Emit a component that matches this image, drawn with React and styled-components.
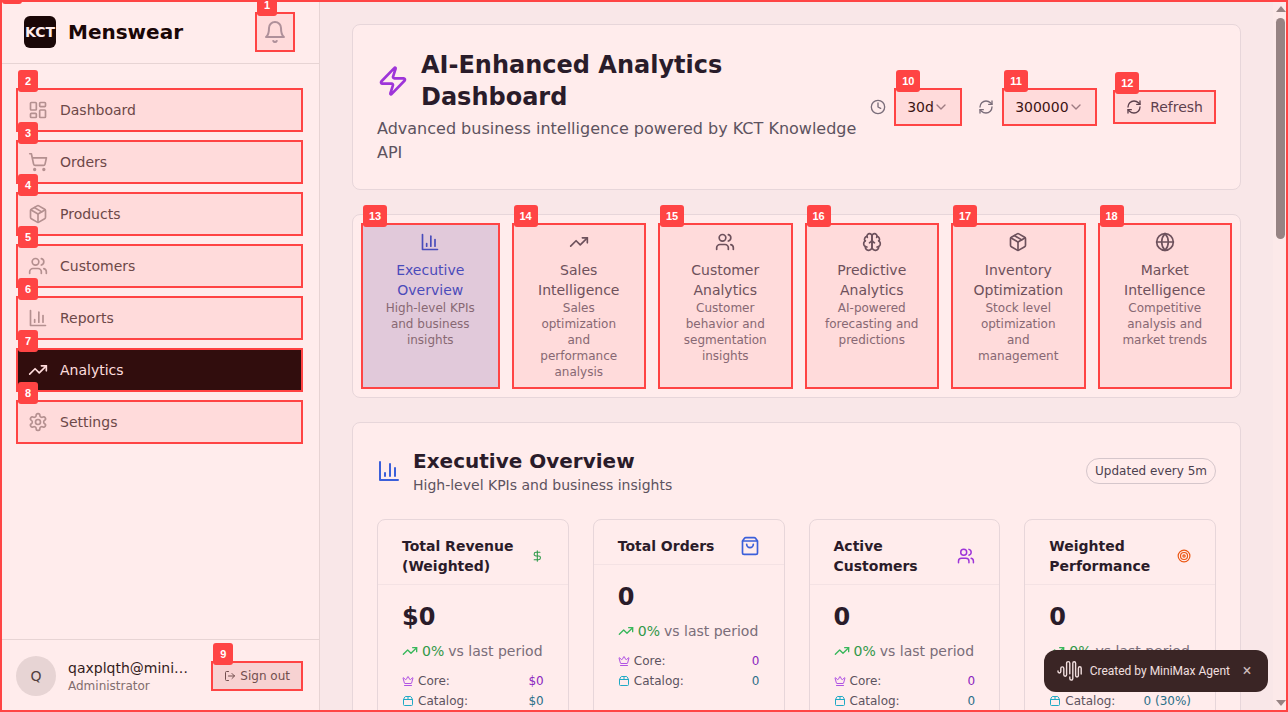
import React from 'react';
import styled, { createGlobalStyle, css } from 'styled-components';
import {
  Users, Package, Package2, ShoppingCart, ShoppingBag, TrendingUp, LayoutDashboard, LogOut,
  Clock, RefreshCw, ChevronDown, Zap, Globe, Crown, Target, DollarSign,
} from 'lucide-react';

const MARK = '#ff4444';

const GlobalStyle = createGlobalStyle`
  *, *::before, *::after { box-sizing: border-box; }
  body {
    margin: 0;
    font-family: "DejaVu Sans", sans-serif;
    font-size: 14px;
    line-height: 20px;
    color: #111827;
  }
  h1, h2, h3, p { margin: 0; }
  button, select { font: inherit; color: inherit; margin: 0; }
  svg { display: block; }
`;

/* Icons */

const StrokeIcon = ({ size = 20, children }) => (
  <svg width={size} height={size} viewBox="0 0 24 24" fill="none" stroke="currentColor"
    strokeWidth="2" strokeLinecap="round" strokeLinejoin="round" aria-hidden="true">
    {children}
  </svg>
);

const BellIcon = ({ size }) => (
  <StrokeIcon size={size}>
    <path d="M6 8a6 6 0 0 1 12 0c0 7 3 9 3 9H3s3-2 3-9" />
    <path d="M10.3 21a1.94 1.94 0 0 0 3.4 0" />
  </StrokeIcon>
);

const BarsIcon = ({ size }) => (
  <StrokeIcon size={size}>
    <path d="M3 3v18h18" />
    <path d="M18 17V9" />
    <path d="M13 17V5" />
    <path d="M8 17v-3" />
  </StrokeIcon>
);

const GearIcon = ({ size }) => (
  <StrokeIcon size={size}>
    <path d="M12.22 2h-.44a2 2 0 0 0-2 2v.18a2 2 0 0 1-1 1.73l-.43.25a2 2 0 0 1-2 0l-.15-.08a2 2 0 0 0-2.73.73l-.22.38a2 2 0 0 0 .73 2.73l.15.1a2 2 0 0 1 1 1.72v.51a2 2 0 0 1-1 1.74l-.15.09a2 2 0 0 0-.73 2.73l.22.38a2 2 0 0 0 2.73.73l.15-.08a2 2 0 0 1 2 0l.43.25a2 2 0 0 1 1 1.73V20a2 2 0 0 0 2 2h.44a2 2 0 0 0 2-2v-.18a2 2 0 0 1 1-1.73l.43-.25a2 2 0 0 1 2 0l.15.08a2 2 0 0 0 2.73-.73l.22-.39a2 2 0 0 0-.73-2.73l-.15-.08a2 2 0 0 1-1-1.74v-.5a2 2 0 0 1 1-1.74l.15-.09a2 2 0 0 0 .73-2.73l-.22-.38a2 2 0 0 0-2.73-.73l-.15.08a2 2 0 0 1-2 0l-.43-.25a2 2 0 0 1-1-1.73V4a2 2 0 0 0-2-2z" />
    <circle cx="12" cy="12" r="3" />
  </StrokeIcon>
);

const BrainIcon = ({ size }) => (
  <StrokeIcon size={size}>
    <path d="M12 5a3 3 0 1 0-5.997.125 4 4 0 0 0-2.526 5.77 4 4 0 0 0 .556 6.588A4 4 0 1 0 12 18Z" />
    <path d="M12 5a3 3 0 1 1 5.997.125 4 4 0 0 1 2.526 5.77 4 4 0 0 1-.556 6.588A4 4 0 1 1 12 18Z" />
    <path d="M15 13a4.5 4.5 0 0 1-3-4 4.5 4.5 0 0 1-3 4" />
    <path d="M17.599 6.5a3 3 0 0 0 .399-1.375" />
    <path d="M6.003 5.125A3 3 0 0 0 6.401 6.5" />
    <path d="M3.477 10.896a4 4 0 0 1 .585-.396" />
    <path d="M19.938 10.5a4 4 0 0 1 .585.396" />
    <path d="M6 18a4 4 0 0 1-1.967-.516" />
    <path d="M19.967 17.484A4 4 0 0 1 18 18" />
  </StrokeIcon>
);

const WaveLogo = () => (
  <svg width="26" height="22" viewBox="0 0 26 22" fill="none" stroke="currentColor"
    strokeWidth="1.4" strokeLinecap="round" aria-hidden="true">
    <path d="M1 11v.6a1.4 1.4 0 0 0 2.8 0V8.4a1.5 1.5 0 0 1 3 0v6.4a1.4 1.4 0 0 0 2.8 0V3.2a1.6 1.6 0 0 1 3.2 0v10.6" />
    <path d="M12.8 17v1.6a1.5 1.5 0 0 0 3 0V3.2a1.4 1.4 0 0 1 2.8 0v12.4a1.4 1.4 0 0 0 2.8 0V8.2a1.4 1.4 0 0 1 2.8 0V14" />
  </svg>
);

/* Numbered highlight frames */

const MarkBox = styled.div`
  position: relative;
  display: flex;
  flex: ${p => p.$flex || 'none'};
  min-width: 0;
  > :first-child { flex: 1; min-width: 0; }
`;

const Frame = styled.span`
  position: ${p => (p.$page ? 'fixed' : 'absolute')};
  inset: 0;
  z-index: ${p => (p.$page ? 20 : 30)};
  border: 2px solid ${MARK};
  background: rgba(255, 68, 68, 0.1);
  pointer-events: none;
`;

const FrameNumber = styled.span`
  position: absolute;
  top: -20px;
  left: 0;
  min-width: 20px;
  height: 22px;
  padding: 0 6px;
  border-radius: 3px;
  background: ${MARK};
  color: #fff;
  font: bold 11px/22px "Liberation Sans", sans-serif;
  text-align: center;
`;

const Marked = ({ n, flex, children }) => (
  <MarkBox $flex={flex}>
    {children}
    <Frame><FrameNumber>{n}</FrameNumber></Frame>
  </MarkBox>
);

/* Shell */

const Shell = styled.div`
  display: flex;
  height: 100vh;
  overflow: hidden;
  background: #f9fafb;
`;

const Sidebar = styled.aside`
  display: flex;
  flex-direction: column;
  flex: none;
  width: 320px;
  background: #fff;
  border-right: 1px solid #e5e5e5;
`;

const SidebarHeader = styled.header`
  display: flex;
  align-items: center;
  gap: 12px;
  height: 64px;
  padding: 0 24px;
  border-bottom: 1px solid #e5e5e5;
`;

const LogoTile = styled.span`
  display: grid;
  place-items: center;
  width: 32px;
  height: 32px;
  border-radius: 6px;
  background: #000;
  color: #fff;
  font-weight: bold;
`;

const BrandName = styled.span`
  flex: 1;
  font-size: 20px;
  line-height: 28px;
  font-weight: bold;
  color: #000;
`;

const IconButton = styled.button`
  padding: 8px;
  border: 0;
  background: none;
  color: #9ca3af;
`;

const Nav = styled.nav`
  display: flex;
  flex-direction: column;
  flex: 1;
  gap: 8px;
  padding: 24px 16px;
`;

const NavLink = styled.a`
  display: flex;
  align-items: center;
  gap: 12px;
  padding: 12px;
  border-radius: 4px;
  text-decoration: none;
  color: ${p => (p.$active ? '#fff' : '#4a4a4a')};
  background: ${p => (p.$active ? '#000' : 'transparent')};
  svg { color: ${p => (p.$active ? '#fff' : '#a3a3a3')}; }
`;

const UserBar = styled.footer`
  display: flex;
  align-items: center;
  gap: 12px;
  padding: 16px;
  border-top: 1px solid #e5e5e5;
`;

const Avatar = styled.span`
  display: grid;
  place-items: center;
  flex: none;
  width: 40px;
  height: 40px;
  border-radius: 50%;
  background: #e5e5e5;
  color: #404040;
`;

const UserText = styled.div`
  flex: 1;
  min-width: 0;
`;

const UserName = styled.p`
  overflow: hidden;
  text-overflow: ellipsis;
  white-space: nowrap;
  color: #171717;
`;

const UserRole = styled.p`
  font-size: 12px;
  line-height: 16px;
  color: #737373;
`;

const SignOut = styled.button`
  display: flex;
  align-items: center;
  gap: 4px;
  padding: 7px 13px;
  border: 0;
  background: #f5f5f5;
  color: #525252;
  font-size: 12px;
  line-height: 16px;
  white-space: nowrap;
`;

const Main = styled.main`
  display: flex;
  flex-direction: column;
  flex: 1;
  min-width: 0;
  gap: 24px;
  padding: 24px 32px;
  overflow-y: auto;
  scrollbar-width: none;
  > * { flex: none; }
`;

const ScrollTrack = styled.div`
  display: flex;
  flex-direction: column;
  align-items: center;
  flex: none;
  width: 15px;
  padding: 6px 0;
  background: #fcfcfc;
`;

const ScrollThumb = styled.div`
  width: 9px;
  height: 31vh;
  margin: 6px 0 auto;
  border-radius: 5px;
  background: #8b8b8b;
`;

const Arrow = styled.span`
  border: 5px solid transparent;
  ${p => (p.$up
    ? css`border-top: 0; border-bottom: 6px solid #8b8b8b;`
    : css`border-bottom: 0; border-top: 6px solid #8b8b8b;`)}
`;

/* Content */

const Card = styled.section`
  padding: ${p => p.$pad || 24}px;
  border: 1px solid #e5e7eb;
  border-radius: 8px;
  background: #fff;
`;

const HeroCard = styled(Card)`
  display: flex;
  align-items: center;
  justify-content: space-between;
`;

const HeroTitle = styled.h1`
  display: flex;
  align-items: center;
  gap: 12px;
  font-size: 24px;
  line-height: 32px;
  svg { flex: none; color: #9333ea; }
`;

const HeroText = styled.p`
  margin-top: 4px;
  font-size: 16px;
  line-height: 24px;
  color: #4b5563;
`;

const Controls = styled.div`
  display: flex;
  align-items: center;
  flex: none;
  gap: 16px;
`;

const Field = styled.label`
  display: flex;
  align-items: center;
  gap: 8px;
  > svg { color: #6b7280; }
`;

const SelectWrap = styled.span`
  position: relative;
  svg {
    position: absolute;
    top: 11px;
    right: 13px;
    opacity: 0.5;
    pointer-events: none;
  }
`;

const Select = styled.select`
  display: block;
  appearance: none;
  height: 38px;
  padding: 0 27px 0 12px;
  border: 1px solid #e5e5e5;
  border-radius: 0;
  background: #fff;
  color: #0a0a0a;
`;

const RefreshButton = styled.button`
  display: flex;
  align-items: center;
  gap: 8px;
  padding: 6px 12px;
  border: 1px solid #d1d5db;
  background: #fff;
  color: #374151;
`;

const Tabs = styled(Card)`
  display: flex;
  gap: 12px;
`;

const Tab = styled.button`
  display: flex;
  flex-direction: column;
  align-items: center;
  padding: 8px 16px;
  border: 1px solid transparent;
  border-width: 1px ${p => (p.$active ? 3 : 1)}px;
  background: ${p => (p.$active ? '#dbeafe' : '#fff')};
  color: ${p => (p.$active ? '#1d4ed8' : '#4b5563')};
`;

const TabTitle = styled.span`
  margin-top: 8px;
`;

const TabText = styled.span`
  font-size: 12px;
  line-height: 16px;
  color: #6b7280;
`;

const SectionHead = styled.header`
  display: flex;
  align-items: center;
  gap: 12px;
  margin-bottom: 24px;
  svg { color: #2563eb; }
`;

const SectionText = styled.div`
  flex: 1;
`;

const SectionTitle = styled.h2`
  font-size: 20px;
  line-height: 28px;
`;

const SectionSub = styled.p`
  color: #4b5563;
`;

const Pill = styled.span`
  padding: 4px 8px;
  border: 1px solid #d1d5db;
  border-radius: 13px;
  font-size: 12px;
  line-height: 16px;
  color: #374151;
`;

const StatGrid = styled.div`
  display: grid;
  grid-template-columns: repeat(4, minmax(0, 1fr));
  gap: 24px;
`;

const StatCard = styled.article`
  border: 1px solid #e5e7eb;
  border-radius: 8px;
`;

const StatHead = styled.header`
  display: flex;
  align-items: center;
  justify-content: space-between;
  padding: 16px 24px 8px;
  border-bottom: 1px solid #f3f4f6;
  svg { min-width: 0; color: ${p => p.$color}; }
`;

const StatTitle = styled.h3`
  font-size: 14px;
`;

const StatBody = styled.div`
  padding: 16px 24px 24px;
`;

const StatValue = styled.p`
  font-size: 24px;
  line-height: 32px;
  font-weight: bold;
`;

const Trend = styled.p`
  display: flex;
  align-items: center;
  gap: 4px;
  margin: 8px 0 12px;
  color: #6b7280;
  white-space: nowrap;
  svg { color: #22c55e; }
`;

const TrendValue = styled.span`
  color: #16a34a;
`;

const SplitRow = styled.p`
  display: flex;
  align-items: center;
  gap: 4px;
  margin-bottom: 4px;
  font-size: 12px;
  line-height: 16px;
  color: #4b5563;
  svg { color: ${p => p.$icon}; }
`;

const SplitValue = styled.span`
  margin-left: auto;
  color: ${p => p.$color};
`;

const Toast = styled.aside`
  position: fixed;
  right: 20px;
  bottom: 20px;
  z-index: 10;
  display: flex;
  align-items: center;
  gap: 7px;
  height: 42px;
  padding: 0 12px 0 13px;
  border-radius: 12px;
  background: #242222;
  color: #f0f0f0;
  font: 12px/16px Roboto, sans-serif;
`;

const ToastClose = styled.button`
  width: 18px;
  margin-left: 1px;
  padding: 0;
  border: 0;
  background: none;
  color: #c8c8c8;
  font-size: 16px;
`;

const navItems = [
  ['Dashboard', LayoutDashboard],
  ['Orders', ShoppingCart],
  ['Products', Package],
  ['Customers', Users],
  ['Reports', BarsIcon],
  ['Analytics', TrendingUp],
  ['Settings', GearIcon],
];

const tabs = [
  ['Executive Overview', 'High-level KPIs and business insights', BarsIcon],
  ['Sales Intelligence', 'Sales optimization and performance analysis', TrendingUp],
  ['Customer Analytics', 'Customer behavior and segmentation insights', Users],
  ['Predictive Analytics', 'AI-powered forecasting and predictions', BrainIcon],
  ['Inventory Optimization', 'Stock level optimization and management', Package],
  ['Market Intelligence', 'Competitive analysis and market trends', Globe],
];

const stats = [
  { title: 'Total Revenue (Weighted)', icon: DollarSign, color: '#16a34a', value: '$0', core: '$0', catalog: '$0' },
  { title: 'Total Orders', icon: ShoppingBag, color: '#2563eb', value: '0', core: '0', catalog: '0' },
  { title: 'Active Customers', icon: Users, color: '#9333ea', value: '0', core: '0', catalog: '0' },
  { title: 'Weighted Performance', icon: Target, color: '#ea580c', value: '0', core: '0 (70%)', catalog: '0 (30%)' },
];

const Stat = ({ title, icon: Icon, color, value, core, catalog }) => (
  <StatCard>
    <StatHead $color={color}>
      <StatTitle>{title}</StatTitle>
      <Icon size={20} />
    </StatHead>
    <StatBody>
      <StatValue>{value}</StatValue>
      <Trend><TrendingUp size={16} /><TrendValue>0%</TrendValue>vs last period</Trend>
      <SplitRow $icon="#a855f7"><Crown size={12} />Core:<SplitValue $color="#7e22ce">{core}</SplitValue></SplitRow>
      <SplitRow $icon="#06b6d4"><Package2 size={12} />Catalog:<SplitValue $color="#0e7490">{catalog}</SplitValue></SplitRow>
    </StatBody>
  </StatCard>
);

const Dropdown = ({ label, value }) => (
  <SelectWrap>
    <Select aria-label={label} defaultValue={value}><option>{value}</option></Select>
    <ChevronDown size={16} />
  </SelectWrap>
);

export default function App() {
  return (
    <>
      <GlobalStyle />
      <Shell>
        <Sidebar>
          <SidebarHeader>
            <LogoTile>KCT</LogoTile>
            <BrandName>Menswear</BrandName>
            <Marked n={1}>
              <IconButton aria-label="Notifications"><BellIcon size={24} /></IconButton>
            </Marked>
          </SidebarHeader>
          <Nav>
            {navItems.map(([label, Icon], i) => (
              <Marked key={label} n={i + 2}>
                <NavLink href="#" $active={label === 'Analytics'}><Icon size={20} />{label}</NavLink>
              </Marked>
            ))}
          </Nav>
          <UserBar>
            <Avatar>Q</Avatar>
            <UserText>
              <UserName>qaxplqth@minimax.com</UserName>
              <UserRole>Administrator</UserRole>
            </UserText>
            <Marked n={9}>
              <SignOut><LogOut size={12} />Sign out</SignOut>
            </Marked>
          </UserBar>
        </Sidebar>

        <Main>
          <HeroCard>
            <div>
              <HeroTitle><Zap size={32} />AI-Enhanced Analytics Dashboard</HeroTitle>
              <HeroText>Advanced business intelligence powered by KCT Knowledge API</HeroText>
            </div>
            <Controls>
              <Field>
                <Clock size={16} />
                <Marked n={10}><Dropdown label="Time range" value="30d" /></Marked>
              </Field>
              <Field>
                <RefreshCw size={16} />
                <Marked n={11}><Dropdown label="Refresh interval" value="300000" /></Marked>
              </Field>
              <Marked n={12}>
                <RefreshButton><RefreshCw size={16} />Refresh</RefreshButton>
              </Marked>
            </Controls>
          </HeroCard>

          <Tabs $pad={8}>
            {tabs.map(([title, text, Icon], i) => (
              <Marked key={title} n={i + 13} flex={i === 0 ? '1 1 4px' : '1 1 0'}>
                <Tab $active={i === 0}>
                  <Icon size={20} />
                  <TabTitle>{title}</TabTitle>
                  <TabText>{text}</TabText>
                </Tab>
              </Marked>
            ))}
          </Tabs>

          <Card>
            <SectionHead>
              <BarsIcon size={24} />
              <SectionText>
                <SectionTitle>Executive Overview</SectionTitle>
                <SectionSub>High-level KPIs and business insights</SectionSub>
              </SectionText>
              <Pill>Updated every 5m</Pill>
            </SectionHead>
            <StatGrid>
              {stats.map(s => <Stat key={s.title} {...s} />)}
            </StatGrid>
          </Card>
        </Main>

        <ScrollTrack aria-hidden="true">
          <Arrow $up />
          <ScrollThumb />
          <Arrow />
        </ScrollTrack>
      </Shell>

      <Toast>
        <WaveLogo />
        Created by MiniMax Agent
        <ToastClose aria-label="Close">×</ToastClose>
      </Toast>

      <Frame $page><FrameNumber>0</FrameNumber></Frame>
    </>
  );
}
